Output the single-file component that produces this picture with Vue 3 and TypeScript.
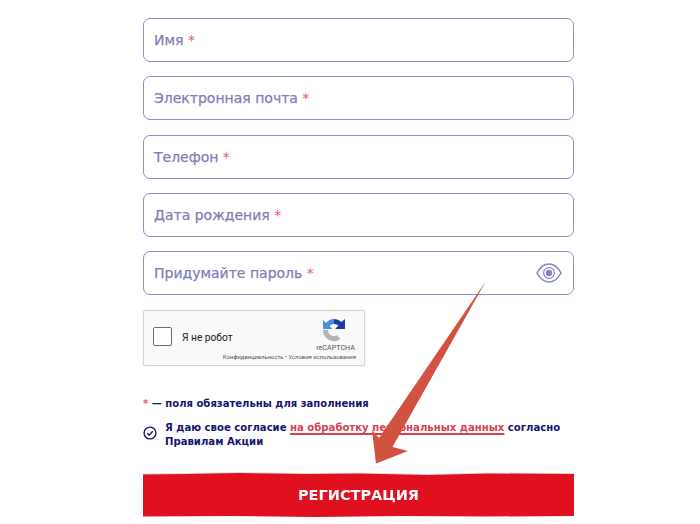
<script setup lang="ts">
const fields = ['Имя', 'Электронная почта', 'Телефон', 'Дата рождения', 'Придумайте пароль']
</script>

<template>
  <div class="page">
    <form class="form" @submit.prevent>
      <div class="fields">
        <div v-for="(f, i) in fields" :key="f" class="field">
          <span class="label">{{ f }}<span class="req"> *</span></span>
          <svg v-if="i === 4" class="eye" viewBox="0 0 26 20" fill="none">
            <path d="M1 10C4 4.300 8.200 1 13 1S22 4.300 25 10C22 15.700 17.800 19 13 19S4 15.700 1 10Z" stroke="#8583c8" stroke-width="1.500" />
            <circle cx="13" cy="10" r="5.400" stroke="#8583c8" stroke-width="1.200" />
            <circle cx="13" cy="10" r="3.200" fill="#8583c8" />
          </svg>
        </div>
      </div>

      <div class="captcha">
        <span class="box"></span>
        <span class="robot">Я не робот</span>
        <div class="brand">
          <svg class="logo" viewBox="0 0 24 24">
            <path d="M12 1V6A6 6 0 0 0 7.500 8L10.500 11H1V2L4 5A11 11 0 0 1 12 1Z" fill="#4a90e2" />
            <path d="M12 1A11 11 0 0 1 19.500 4L23 1V11H13L16.500 7.500A6 6 0 0 0 12 6Z" fill="#1c3aa9" />
            <path d="M1 12H6A6 6 0 0 0 15 17.200L18.500 21A11 11 0 0 1 1 12Z" fill="#b5b5b5" />
          </svg>
          <span class="re">reCAPTCHA</span>
        </div>
        <span class="terms">Конфиденциальность • Условия использования</span>
      </div>

      <p class="note"><span class="req">*</span> — поля обязательны для заполнения</p>

      <div class="consent">
        <svg class="check" viewBox="0 0 14 14" fill="none">
          <circle cx="7" cy="7" r="5.900" stroke="#14146e" stroke-width="1.400" />
          <path d="M4.300 7.200L6.200 9L9.800 5.300" stroke="#14146e" stroke-width="1.400" />
        </svg>
        <p>Я даю свое согласие <a href="#" class="link">на обработку персональных данных</a> согласно Правилам Акции</p>
      </div>

      <div class="submit-wrap">
        <button class="submit" type="submit">РЕГИСТРАЦИЯ</button>
      </div>
    </form>

    <svg class="arrow" viewBox="0 0 700 524">
      <path d="M486 281L392.500 447L408 451L376 463.500L372 430L379 438Z" fill="#d0523f" />
    </svg>
  </div>
</template>

<style>
html, body { margin: 0; background: #fff; }
</style>

<style scoped>
.page {
  position: relative;
  width: 700px;
  height: 524px;
  overflow: hidden;
  background: #fff;
  font-family: "DejaVu Sans", sans-serif;
}
.form {
  width: 431px;
  margin-left: 143px;
  padding-top: 18px;
}
.fields {
  display: flex;
  flex-direction: column;
  gap: 14.250px;
}
.field {
  box-sizing: border-box;
  height: 44px;
  border: 1.400px solid #8f8dcb;
  border-radius: 7px;
  display: flex;
  align-items: center;
  justify-content: space-between;
  padding: 0 11px 0 10px;
}
.label {
  font-size: 14px;
  color: #7f7dbb;
  -webkit-text-stroke: .25px #7f7dbb;
}
.req { color: #e8566a; -webkit-text-stroke: 0; }
.eye { width: 26px; height: 20px; }
.captcha {
  position: relative;
  box-sizing: border-box;
  width: 222px;
  height: 56px;
  margin-top: 15px;
  background: #f9f9f9;
  border: 1px solid #d6d6d6;
  border-radius: 2px;
  box-shadow: 0 0 3px rgba(0, 0, 0, .08);
  font-family: Roboto, sans-serif;
}
.box {
  box-sizing: border-box;
  position: absolute;
  left: 9px;
  top: 16px;
  width: 19px;
  height: 19px;
  border: 1.500px solid #6b6b6b;
  border-radius: 2px;
  background: #fff;
}
.robot {
  position: absolute;
  left: 38px;
  top: 21px;
  font-size: 10.200px;
  color: #222;
}
.brand {
  position: absolute;
  right: 9px;
  top: 7px;
  display: flex;
  flex-direction: column;
  align-items: flex-end;
}
.logo { width: 24px; height: 24px; margin-right: 9px; }
.re { font-size: 7.200px; color: #555; margin-top: 1px; }
.terms {
  position: absolute;
  right: 8px;
  bottom: 5px;
  font-size: 5.900px;
  color: #555;
  white-space: nowrap;
}
.note {
  margin: 31px 0 0;
  font-size: 10.050px;
  line-height: 14px;
  font-weight: 700;
  color: #14146e;
}
.consent {
  display: flex;
  gap: 8px;
  margin-top: 10px;
}
.check { width: 14px; height: 14px; flex: none; margin-top: 5px; }
.consent p {
  margin: 0;
  font-size: 10.100px;
  line-height: 14px;
  font-weight: 700;
  color: #14146e;
}
.link {
  color: #d8404e;
  text-decoration: underline;
  text-decoration-thickness: 1.500px;
  text-underline-offset: 2px;
}
.submit-wrap {
  margin-top: 24px;
  filter: drop-shadow(0 -1px 0 #dcdcdc);
}
.submit {
  display: block;
  width: 431px;
  height: 44px;
  border: 0;
  background: #e01020;
  color: #fff;
  font: 700 14.500px "DejaVu Sans", sans-serif;
  clip-path: polygon(0 1.500px, 10% 1px, 22% 0, 38% 1px, 50% 0.500px, 66% 2px, 80% 0.500px, 100% 1px, 100% 43px, 80% 43.500px, 60% 43px, 40% 44px, 20% 43px, 0 43.500px);
}
.arrow {
  position: absolute;
  inset: 0;
  width: 700px;
  height: 524px;
  pointer-events: none;
}
</style>
